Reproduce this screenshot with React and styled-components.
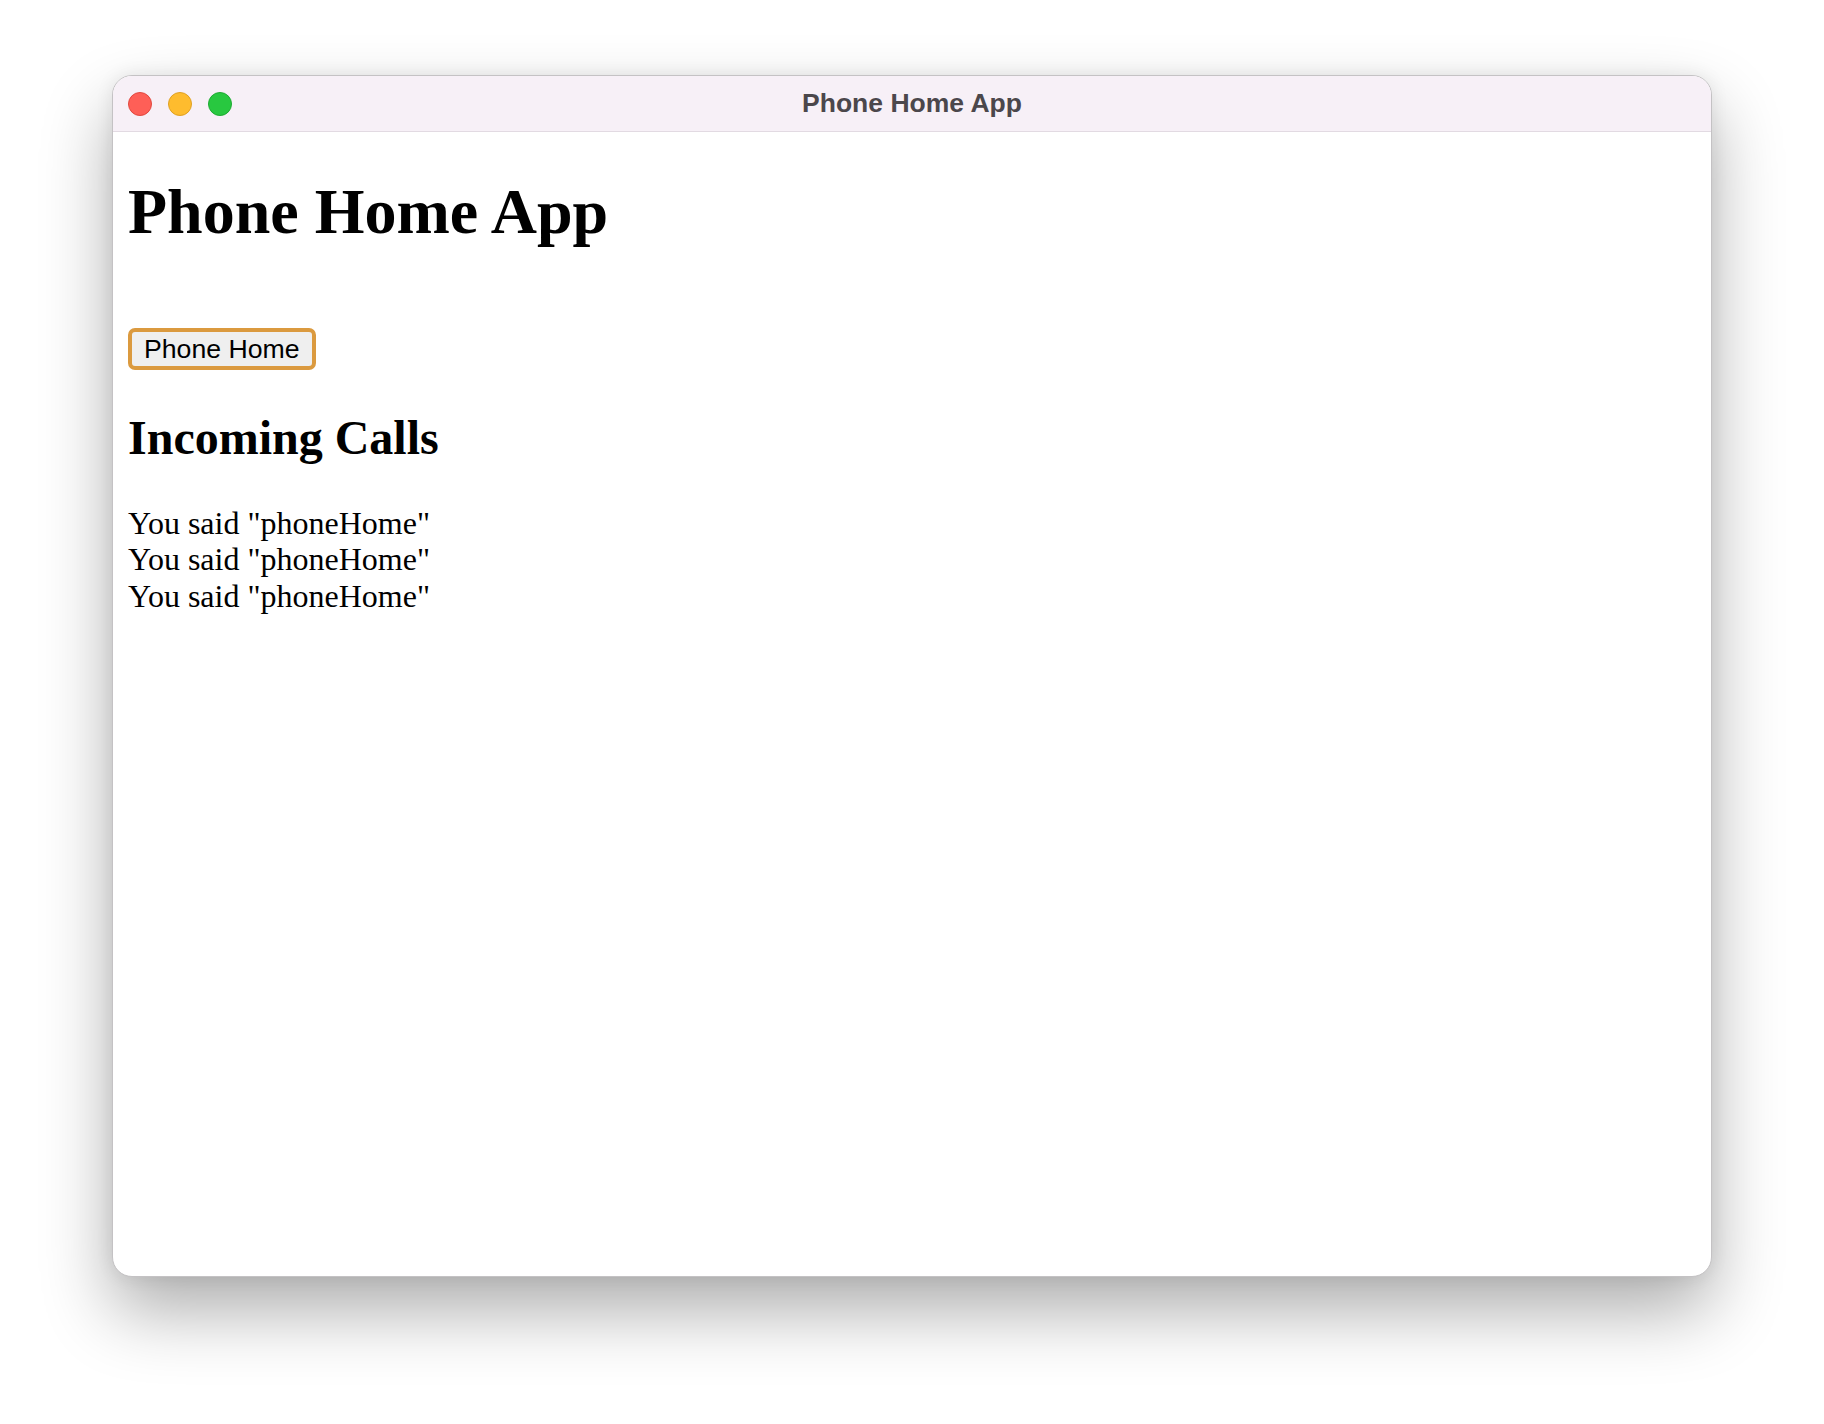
import React from "react";
import styled, { createGlobalStyle } from "styled-components";

const GlobalStyle = createGlobalStyle`
  html, body {
    margin: 0;
    padding: 0;
    background: #ffffff;
  }
  * {
    box-sizing: border-box;
  }
`;

const Page = styled.div`
  width: 1824px;
  height: 1424px;
  padding: 75px 112px 0;
  background: #ffffff;
`;

const Window = styled.div`
  display: flex;
  flex-direction: column;
  width: 1600px;
  height: 1202px;
  border: 1px solid #c4c2c4;
  border-radius: 20px;
  overflow: hidden;
  background: #ffffff;
  box-shadow: 0 34px 70px rgba(0, 0, 0, 0.32), 0 0 18px rgba(0, 0, 0, 0.08);
`;

const TitleBar = styled.div`
  position: relative;
  display: flex;
  align-items: center;
  justify-content: center;
  height: 56px;
  flex: none;
  background: #f7f0f7;
  border-bottom: 1px solid #e2dae2;
`;

const Lights = styled.div`
  position: absolute;
  left: 15px;
  top: 0;
  bottom: 0;
  display: flex;
  align-items: center;
  gap: 16px;
`;

const Light = styled.span`
  width: 24px;
  height: 24px;
  border-radius: 50%;
  background: ${(p) => p.color};
  border: 1px solid ${(p) => p.edge};
`;

const Title = styled.div`
  font-family: "Liberation Sans", Arial, sans-serif;
  font-weight: 700;
  font-size: 26.5px;
  color: #4b474b;
`;

const Content = styled.div`
  flex: 1;
  display: flow-root;
  padding: 0 15px;
  font-family: "Liberation Serif", "Times New Roman", serif;
  color: #000000;
`;

const Heading = styled.h1`
  margin: 43px 0 0;
  font-size: 64px;
  line-height: 73px;
  font-weight: 700;
`;

const Controls = styled.div`
  display: flex;
  padding-top: 80px;
`;

const PhoneButton = styled.button`
  height: 42px;
  padding: 0 12px;
  border: 4px solid #db9a3f;
  border-radius: 7px;
  background: #efefef;
  font-family: "Liberation Sans", Arial, sans-serif;
  font-size: 26.67px;
  color: #000000;
  cursor: pointer;
  outline: none;
`;

const SubHeading = styled.h2`
  margin: 40px 0 40px;
  font-size: 48px;
  line-height: 55px;
  font-weight: 700;
`;

const CallLine = styled.div`
  font-size: 32px;
  line-height: 36.4px;
`;

const calls = ["phoneHome", "phoneHome", "phoneHome"];

export default function App() {
  return (
    <>
      <GlobalStyle />
      <Page>
        <Window>
          <TitleBar>
            <Lights>
              <Light color="#fe5f57" edge="#e1483f" />
              <Light color="#febc2e" edge="#dfa023" />
              <Light color="#28c840" edge="#1eaa32" />
            </Lights>
            <Title>Phone Home App</Title>
          </TitleBar>
          <Content>
            <Heading>Phone Home App</Heading>
            <Controls>
              <PhoneButton>Phone Home</PhoneButton>
            </Controls>
            <SubHeading>Incoming Calls</SubHeading>
            {calls.map((c, i) => (
              <CallLine key={i}>You said "{c}"</CallLine>
            ))}
          </Content>
        </Window>
      </Page>
    </>
  );
}
